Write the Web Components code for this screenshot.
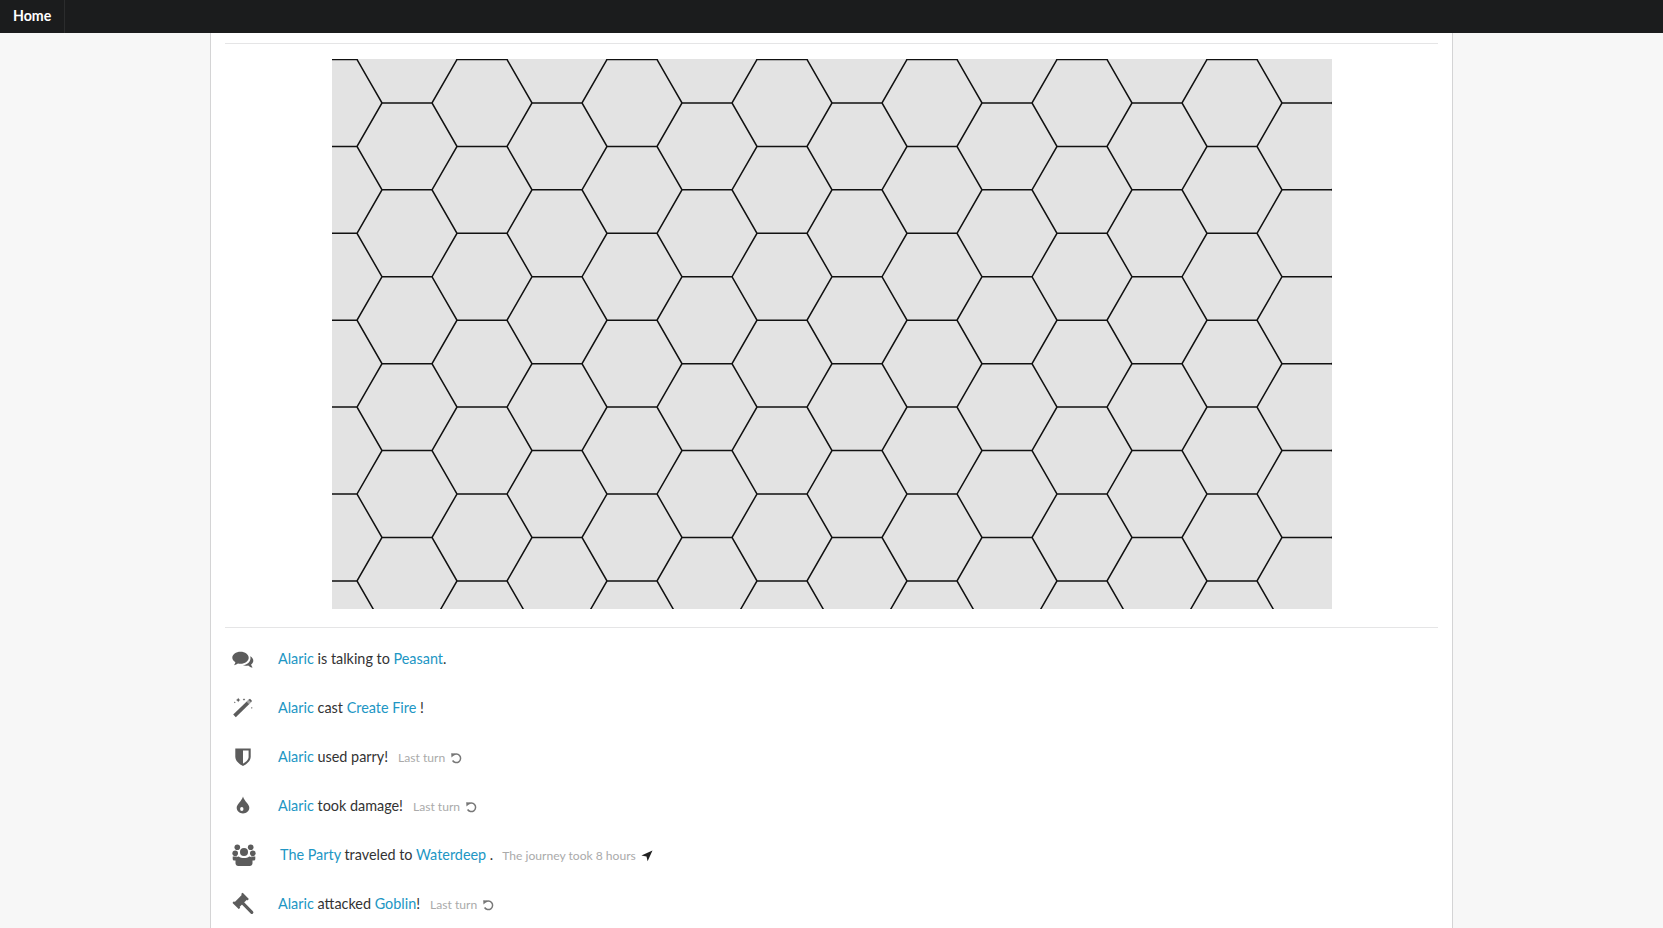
<!DOCTYPE html>
<html><head><meta charset="utf-8">
<style>
html,body{margin:0;height:928px;overflow:hidden;background:#f7f7f7;font-family:Lato,"Open Sans",sans-serif;font-size:14px;color:#333}
a{color:#2196c4;text-decoration:none}
</style></head><body>
<app-nav>Home</app-nav>
<app-page>
  <hex-map></hex-map>
  <log-list>
    <log-entry icon="comments"><a>Alaric</a> is talking to <a>Peasant</a>.</log-entry>
    <log-entry icon="magic"><a>Alaric</a> cast <a>Create Fire</a> !</log-entry>
    <log-entry icon="shield" meta="Last turn" glyph="undo"><a>Alaric</a> used parry!</log-entry>
    <log-entry icon="tint" meta="Last turn" glyph="undo"><a>Alaric</a> took damage!</log-entry>
    <log-entry icon="users" meta="The journey took 8 hours" glyph="arrow" indent><a>The Party</a> traveled to <a>Waterdeep</a> .</log-entry>
    <log-entry icon="gavel" meta="Last turn" glyph="undo"><a>Alaric</a> attacked <a>Goblin</a>!</log-entry>
  </log-list>
</app-page>
<script>
const ICONS={
comments:`<path d="M9.5 4.8c4.6 0 8.2 2.700 8.200 6s-3.600 6-8.200 6c-.9 0-1.700-.1-2.500-.3-1.200.9-2.500 1.400-4 1.700.7-.9 1.200-1.800 1.400-2.900C2.600 14.200 1.300 12.600 1.300 10.800c0-3.300 3.600-6 8.200-6z"/><path d="M19.200 9.300c1.900 1 3.100 2.600 3.100 4.400 0 1.500-.8 2.900-2.200 3.800.2 1.100.8 2 1.500 3.100-1.700-.3-3.200-1-4.400-2.200-.7.2-1.500.3-2.300.3-1.100 0-2.100-.2-3-.5 4.300-.2 7.600-3.200 7.600-6.900 0-.6-.1-1.200-.3-2z"/>`,
magic:`<path d="M2.200 18.600 17.800 3.400l1.200-.6 1.900 1.900-.5 1.300L4.800 21.200z"/><path d="M15.500 5.700l2.900 2.900 2-2-2.900-2.900z" fill="#fff" opacity=".45"/><path d="M7.200 1.800l.7 1.500 1.500.7-1.500.7-.7 1.500-.7-1.500L5 4l1.500-.7zM13 2.200l.4.9.9.4-.9.4-.4.900-.4-.9-.9-.4.9-.4zM3.800 5.500l.3.6.6.3-.6.3-.3.600-.3-.6-.6-.3.600-.3zM20.800 11l.3.600.6.3-.6.3-.3.600-.3-.6-.6-.3.600-.3z"/>`,
shield:`<path d="M4.300 3.400H19.700V12c0 4.300-4.900 7.600-7.700 9-2.800-1.400-7.700-4.700-7.700-9z"/><path d="M12 5.600H17.600V12c0 2.900-3.300 5.300-5.600 6.600z" fill="#fff"/>`,
tint:`<path d="M12 2.400c.6 2.400 2.300 4.300 4 6.600 1.400 1.800 2.300 3.100 2.300 4.800 0 3.200-2.800 5.700-6.300 5.700s-6.300-2.500-6.300-5.700c0-1.700.9-3 2.300-4.800 1.700-2.300 3.400-4.200 4-6.600z"/><ellipse cx="10.800" cy="15" rx="1.700" ry="1.900" fill="#fff"/>`,
users:`<circle cx="6.300" cy="4.300" r="2.800"/><circle cx="19.700" cy="4.300" r="2.800"/><circle cx="13" cy="9.100" r="4"/><circle cx="4.200" cy="10.200" r="2.800"/><circle cx="21.800" cy="10.200" r="2.800"/><path d="M1.700 13.500h4.200l-.6 4H3.200c-.9 0-1.500-.7-1.500-1.500zM24.300 13.500h-4.200l.6 4h2.100c.9 0 1.500-.7 1.500-1.500z"/><path d="M7.800 13.500c1.200 1 3.100 1.500 5.200 1.500s4-.5 5.200-1.500c1.600 0 3.300 1 3.300 3.200v3.600c0 1.600-1.200 2.700-2.800 2.700H7.300c-1.600 0-2.800-1.100-2.800-2.700v-3.600c0-2.200 1.700-3.200 3.300-3.200z"/>`,
gavel:`<g transform="translate(0 .7)"><g transform="rotate(45 9.700 8.200)"><rect x="6.200" y="2.200" width="7" height="12"/><rect x="5.200" y="1" width="9" height="2.200" rx=".5"/><rect x="5.200" y="13.200" width="9" height="2.200" rx=".5"/></g><path d="M11 9.700 20.800 19.600" stroke="#5c5c5c" stroke-width="3.200" stroke-linecap="round"/></g>`
};
const GLYPHS={
undo:`<svg width="12" height="12" viewBox="0 0 12 12" style="color:#777"><path d="M3.200 3.300A4.300 4.300 0 1 1 2.600 8.500" fill="none" stroke="currentColor" stroke-width="1.500"/><path d="M1.200 1.200 5.800 1.400 1.500 5.600z" fill="currentColor"/></svg>`,
arrow:`<svg width="12" height="12" viewBox="0 0 12 12" style="color:#222"><path d="M11.500.5 6.600 11.300 5.500 6.400.4 5.600z" fill="currentColor"/></svg>`
};
const def=(n,html)=>customElements.define(n,class extends HTMLElement{
  connectedCallback(){ if(this.shadowRoot)return; const r=this.attachShadow({mode:"open"}); r.innerHTML=typeof html==="function"?html(this):html; }
});
def("app-nav",`<style>
:host{display:flex;height:33px;background:#1b1c1d;box-sizing:border-box}
div{padding:0 13px;font:700 14.2px/32px Lato,sans-serif;color:#fff;border-right:1px solid #2b2c2d}
</style><div><slot></slot></div>`);
def("app-page",`<style>
:host{display:block;box-sizing:border-box;width:1243px;margin:0 0 0 210px;height:895px;background:#fff;border:solid #d4d4d5;border-width:0 1px;padding:10px 14px 0}
hr{border:0;border-top:1px solid #e5e5e6;margin:0 0 15px}
</style><hr><slot></slot>`);
def("hex-map",()=>{
  const W=1000,H=550,R=50,h=43.45,off=.5;
  let d="";
  for(let c=-1;c<=14;c++){
    for(let r=-1;r<=7;r++){
      const cx=75*c, cy=off+h+2*h*r+(c%2?h:0);
      const p=[[cx-R,cy],[cx-R/2,cy-h],[cx+R/2,cy-h],[cx+R,cy],[cx+R/2,cy+h],[cx-R/2,cy+h]];
      d+="M"+p.map(q=>q[0]+" "+q[1].toFixed(2)).join("L")+"Z";
    }
  }
  return `<style>:host{display:block}
  .w{display:flex;justify-content:center}
  svg{display:block;background:#e3e3e3}
  hr{border:0;border-top:1px solid #e5e5e6;margin:18px 0 0}</style>
  <div class="w"><svg width="${W}" height="${H}" viewBox="0 0 ${W} ${H}"><path d="${d}" fill="none" stroke="#111" stroke-width="1.500"/></svg></div><hr>`;
});
def("log-list",`<style>:host{display:grid;grid-auto-rows:49px;padding-top:6px}</style><slot></slot>`);
def("log-entry",e=>{
  const meta=e.getAttribute("meta"),g=e.getAttribute("glyph"),ind=e.hasAttribute("indent");
  return `<style>
  :host{display:grid;grid-template-columns:53px 1fr;align-items:center;font:14.4px Lato,sans-serif;color:#333}
  .i{width:24px;height:24px;margin-left:6px;fill:#5c5c5c;overflow:visible;display:block}
  .t{display:flex;align-items:center;white-space:pre;${ind?"padding-left:2px;":""}}
  .m{margin-left:${ind?9:10}px;font-size:12.1px;color:#aaa;display:inline-flex;align-items:center;gap:2px;position:relative;top:1px}
  </style>
  <svg class="i" viewBox="0 0 24 24">${ICONS[e.getAttribute("icon")]}</svg>
  <div class="t"><span><slot></slot></span>${meta?`<span class="m">${meta} ${GLYPHS[g]}</span>`:""}</div>`;
});
</script>
</body></html>
